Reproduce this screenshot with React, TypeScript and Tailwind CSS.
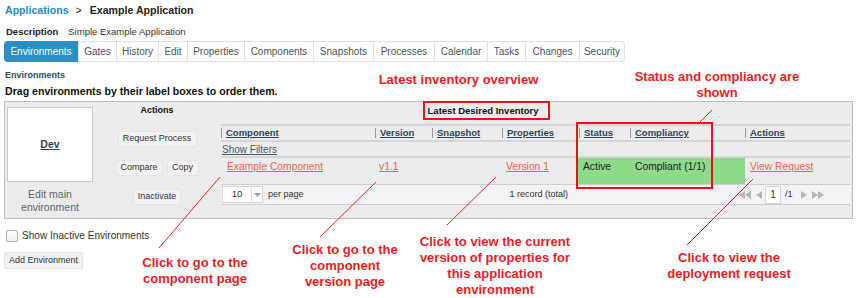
const tabs: [string, number][] = [
  ["Environments", 74],
  ["Gates", 38],
  ["History", 42],
  ["Edit", 29],
  ["Properties", 57],
  ["Components", 69],
  ["Snapshots", 60],
  ["Processes", 61],
  ["Calendar", 53],
  ["Tasks", 38],
  ["Changes", 54],
  ["Security", 45],
];

const cols = "grid grid-cols-[154px_57px_70px_75px_53px_115px_105px]";

function Btn({ children, className }: { children: React.ReactNode; className?: string }) {
  return (
    <div
      className={`h-[16px] flex items-center justify-center bg-[#f3f1f3] border border-[#e6e4e6] rounded-[2px] text-[9px] text-[#333] ${className ?? ""}`}
    >
      {children}
    </div>
  );
}

function Head({ label, className }: { label: string; className?: string }) {
  return (
    <div className={`flex items-center ${className ?? ""}`}>
      <span className="w-px h-[10px] bg-[#9a9a9a]" />
      <span className="ml-[4px] text-[9.5px] font-bold underline text-[#2d4558]">{label}</span>
    </div>
  );
}

function Annotation({ className, children }: { className: string; children: React.ReactNode }) {
  return (
    <div className={`absolute text-center text-[13px] leading-[16px] font-bold text-[#ec1c24] ${className}`}>
      {children}
    </div>
  );
}

export default function App() {
  return (
    <div className="relative w-[857px] h-[298px] bg-white overflow-hidden font-['Liberation_Sans',Arial,sans-serif] text-[#333]">
      {/* breadcrumb */}
      <div className="flex items-center h-[14px] mt-[4px] ml-[5px] text-[10.6px] font-bold">
        <span className="text-[#1a8bc6]">Applications</span>
        <span className="ml-[7px] font-normal text-[#222]">&gt;</span>
        <span className="ml-[8px] text-[#222]">Example Application</span>
      </div>

      <div className="flex items-center h-[14px] mt-[7px] ml-[6px] text-[9.5px]">
        <span className="font-bold text-[#222]">Description</span>
        <span className="ml-[10px] text-[#333]">Simple Example Application</span>
      </div>

      {/* tabs */}
      <div className="flex mt-[2px] ml-[4px] w-fit h-[21px] border border-[#dbe2e8] rounded-[4px] text-[10px]">
        {tabs.map(([t, w], i) => (
          <div
            key={t}
            style={{ width: w }}
            className={`flex items-center justify-center ${
              i === 0
                ? "bg-[#2a8fc6] text-white rounded-l-[4px] -my-px -ml-px h-[21px]"
                : "text-[#4a5560] border-l border-[#dbe2e8]"
            }`}
          >
            {t}
          </div>
        ))}
      </div>

      <div className="mt-[8px] ml-[5px] h-[12px] flex items-center text-[9px] font-bold text-[#2f4a5c]">Environments</div>
      <div className="mt-[3px] ml-[5px] h-[14px] flex items-center text-[10.6px] font-bold text-[#111]">
        Drag environments by their label boxes to order them.
      </div>

      {/* environments panel */}
      <div className="mx-[4px] mt-[2px] h-[118px] border border-[#bdbdbd] bg-[#ececec] flex">
        <div className="w-[95px] pl-[2px] pt-[5px]">
          <div className="w-[86px] h-[75px] bg-white border border-[#c9c9c9] flex items-center justify-center">
            <span className="text-[10.5px] font-bold underline text-[#2d4558]">Dev</span>
          </div>
          <div className="w-[86px] mt-[6px] text-center text-[10.5px] leading-[13px] text-[#56697a]">
            Edit main
            <br />
            environment
          </div>
        </div>

        <div className="w-[114px] flex flex-col items-center">
          <div className="mt-[3px] h-[12px] flex items-center text-[9px] font-bold text-[#111]">Actions</div>
          <Btn className="mt-[14px] w-[79px]">Request Process</Btn>
          <div className="mt-[13px] flex gap-[4px]">
            <Btn className="w-[47px]">Compare</Btn>
            <Btn className="w-[32px]">Copy</Btn>
          </div>
          <Btn className="mt-[13px] w-[48px]">Inactivate</Btn>
        </div>

        <div className="ml-[7px] w-[629px] flex flex-col">
          <div className="h-[24px] flex border-b-2 border-[#d6d6d6]">
            <div className="w-[524px] flex justify-center pt-[3px]">
              <span className="h-[12px] flex items-center text-[9.5px] font-bold text-[#111]">Latest Desired Inventory</span>
            </div>
          </div>
          <div className={`${cols} h-[16px] border-b-2 border-[#d6d6d6]`}>
            <Head label="Component" />
            <Head label="Version" />
            <Head label="Snapshot" />
            <Head label="Properties" />
            <Head label="Status" className="pl-[2px]" />
            <Head label="Compliancy" />
            <Head label="Actions" />
          </div>
          <div className="h-[16px] flex items-center border-b-2 border-[#d6d6d6]">
            <span className="ml-[1px] text-[10px] underline text-[#3e5b70]">Show Filters</span>
          </div>
          <div className={`${cols} h-[26px] text-[10.3px] leading-[12px]`}>
            <div className="pl-[6px] pt-[3px]">
              <span className="underline text-[#f2673f]">Example Component</span>
            </div>
            <div className="pl-[4px] pt-[3px]">
              <span className="underline text-[#f2673f]">v1.1</span>
            </div>
            <div />
            <div className="pl-[4px] pt-[3px]">
              <span className="underline text-[#f2673f]">Version 1</span>
            </div>
            <div className="col-span-2 grid grid-cols-[53px_115px] bg-[#8fd98a] text-[#222]">
              <div className="pl-[6px] pt-[3px]">Active</div>
              <div className="pl-[5px] pt-[3px]">Compliant (1/1)</div>
            </div>
            <div className="pl-[5px] pt-[3px]">
              <span className="underline text-[#f2673f]">View Request</span>
            </div>
          </div>
          <div className="h-[21px] flex items-center border-y border-[#cfcfcf] bg-[#f4f2f6] text-[9px] text-[#333]">
            <div className="ml-[1px] w-[41px] h-[17px] bg-white border border-[#d3d6dc] flex">
              <span className="w-[28px] flex items-center justify-center text-[9.5px]">10</span>
              <span className="flex-1 border-l border-[#dfe2e6] flex items-center justify-center">
                <svg width="7" height="4" viewBox="0 0 7 4">
                  <path d="M0 0h7L3.5 4z" fill="#8fa3c0" />
                </svg>
              </span>
            </div>
            <span className="ml-[5px]">per page</span>
            <span className="ml-[206px]">1 record (total)</span>
            <div className="ml-[171px] flex items-center">
              <svg width="12" height="8" viewBox="0 0 12 8">
                <path d="M6 0v8L0 4zM12 0v8L6 4z" fill="#b3b8be" />
              </svg>
              <svg className="ml-[5px]" width="6" height="8" viewBox="0 0 6 8">
                <path d="M6 0v8L0 4z" fill="#b3b8be" />
              </svg>
              <span className="ml-[3px] w-[16px] h-[18px] bg-white border border-[#d3d6dc] flex items-center justify-center text-[10px]">
                1
              </span>
              <span className="ml-[4px] text-[9px]">/1</span>
              <svg className="ml-[8px]" width="6" height="8" viewBox="0 0 6 8">
                <path d="M0 0v8l6-4z" fill="#b3b8be" />
              </svg>
              <svg className="ml-[5px]" width="12" height="8" viewBox="0 0 12 8">
                <path d="M0 0v8l6-4zM6 0v8l6-4z" fill="#b3b8be" />
              </svg>
            </div>
          </div>
        </div>
      </div>

      <div className="mt-[10px] ml-[6px] flex items-center h-[14px]">
        <span className="w-[12px] h-[12px] border border-[#a9b1ba] rounded-[2px] bg-gradient-to-b from-white to-[#eef0f3]" />
        <span className="ml-[4px] text-[10.1px] text-[#333]">Show Inactive Environments</span>
      </div>
      <Btn className="mt-[9px] ml-[4px] w-[79px] h-[17px]">Add Environment</Btn>

      {/* annotations */}
      <svg className="absolute left-0 top-0 pointer-events-none" width="857" height="298">
        <g stroke="#e8232b" strokeWidth="1" fill="none">
          <line x1="220" y1="177" x2="159" y2="248" />
          <line x1="376" y1="182" x2="320" y2="237" />
          <line x1="496" y1="177" x2="447" y2="225" />
          <line x1="753" y1="179" x2="687" y2="245" />
          <line x1="712" y1="110" x2="700" y2="122" />
        </g>
        <g stroke="#e8141b" strokeWidth="2" fill="none">
          <rect x="424" y="102" width="125" height="17" />
          <rect x="577" y="123" width="135" height="65" />
        </g>
      </svg>
      <Annotation className="left-[357px] top-[72px] w-[203px]">Latest inventory overview</Annotation>
      <Annotation className="left-[617px] top-[69px] w-[200px]">
        Status and compliancy are
        <br />
        shown
      </Annotation>
      <Annotation className="left-[115px] top-[255px] w-[160px]">
        Click to go to the
        <br />
        component page
      </Annotation>
      <Annotation className="left-[265px] top-[242px] w-[160px]">
        Click to go to the
        <br />
        component
        <br />
        version page
      </Annotation>
      <Annotation className="left-[405px] top-[234px] w-[180px]">
        Click to view the current
        <br />
        version of properties for
        <br />
        this application
        <br />
        environment
      </Annotation>
      <Annotation className="left-[649px] top-[250px] w-[160px]">
        Click to view the
        <br />
        deployment request
      </Annotation>
    </div>
  );
}
